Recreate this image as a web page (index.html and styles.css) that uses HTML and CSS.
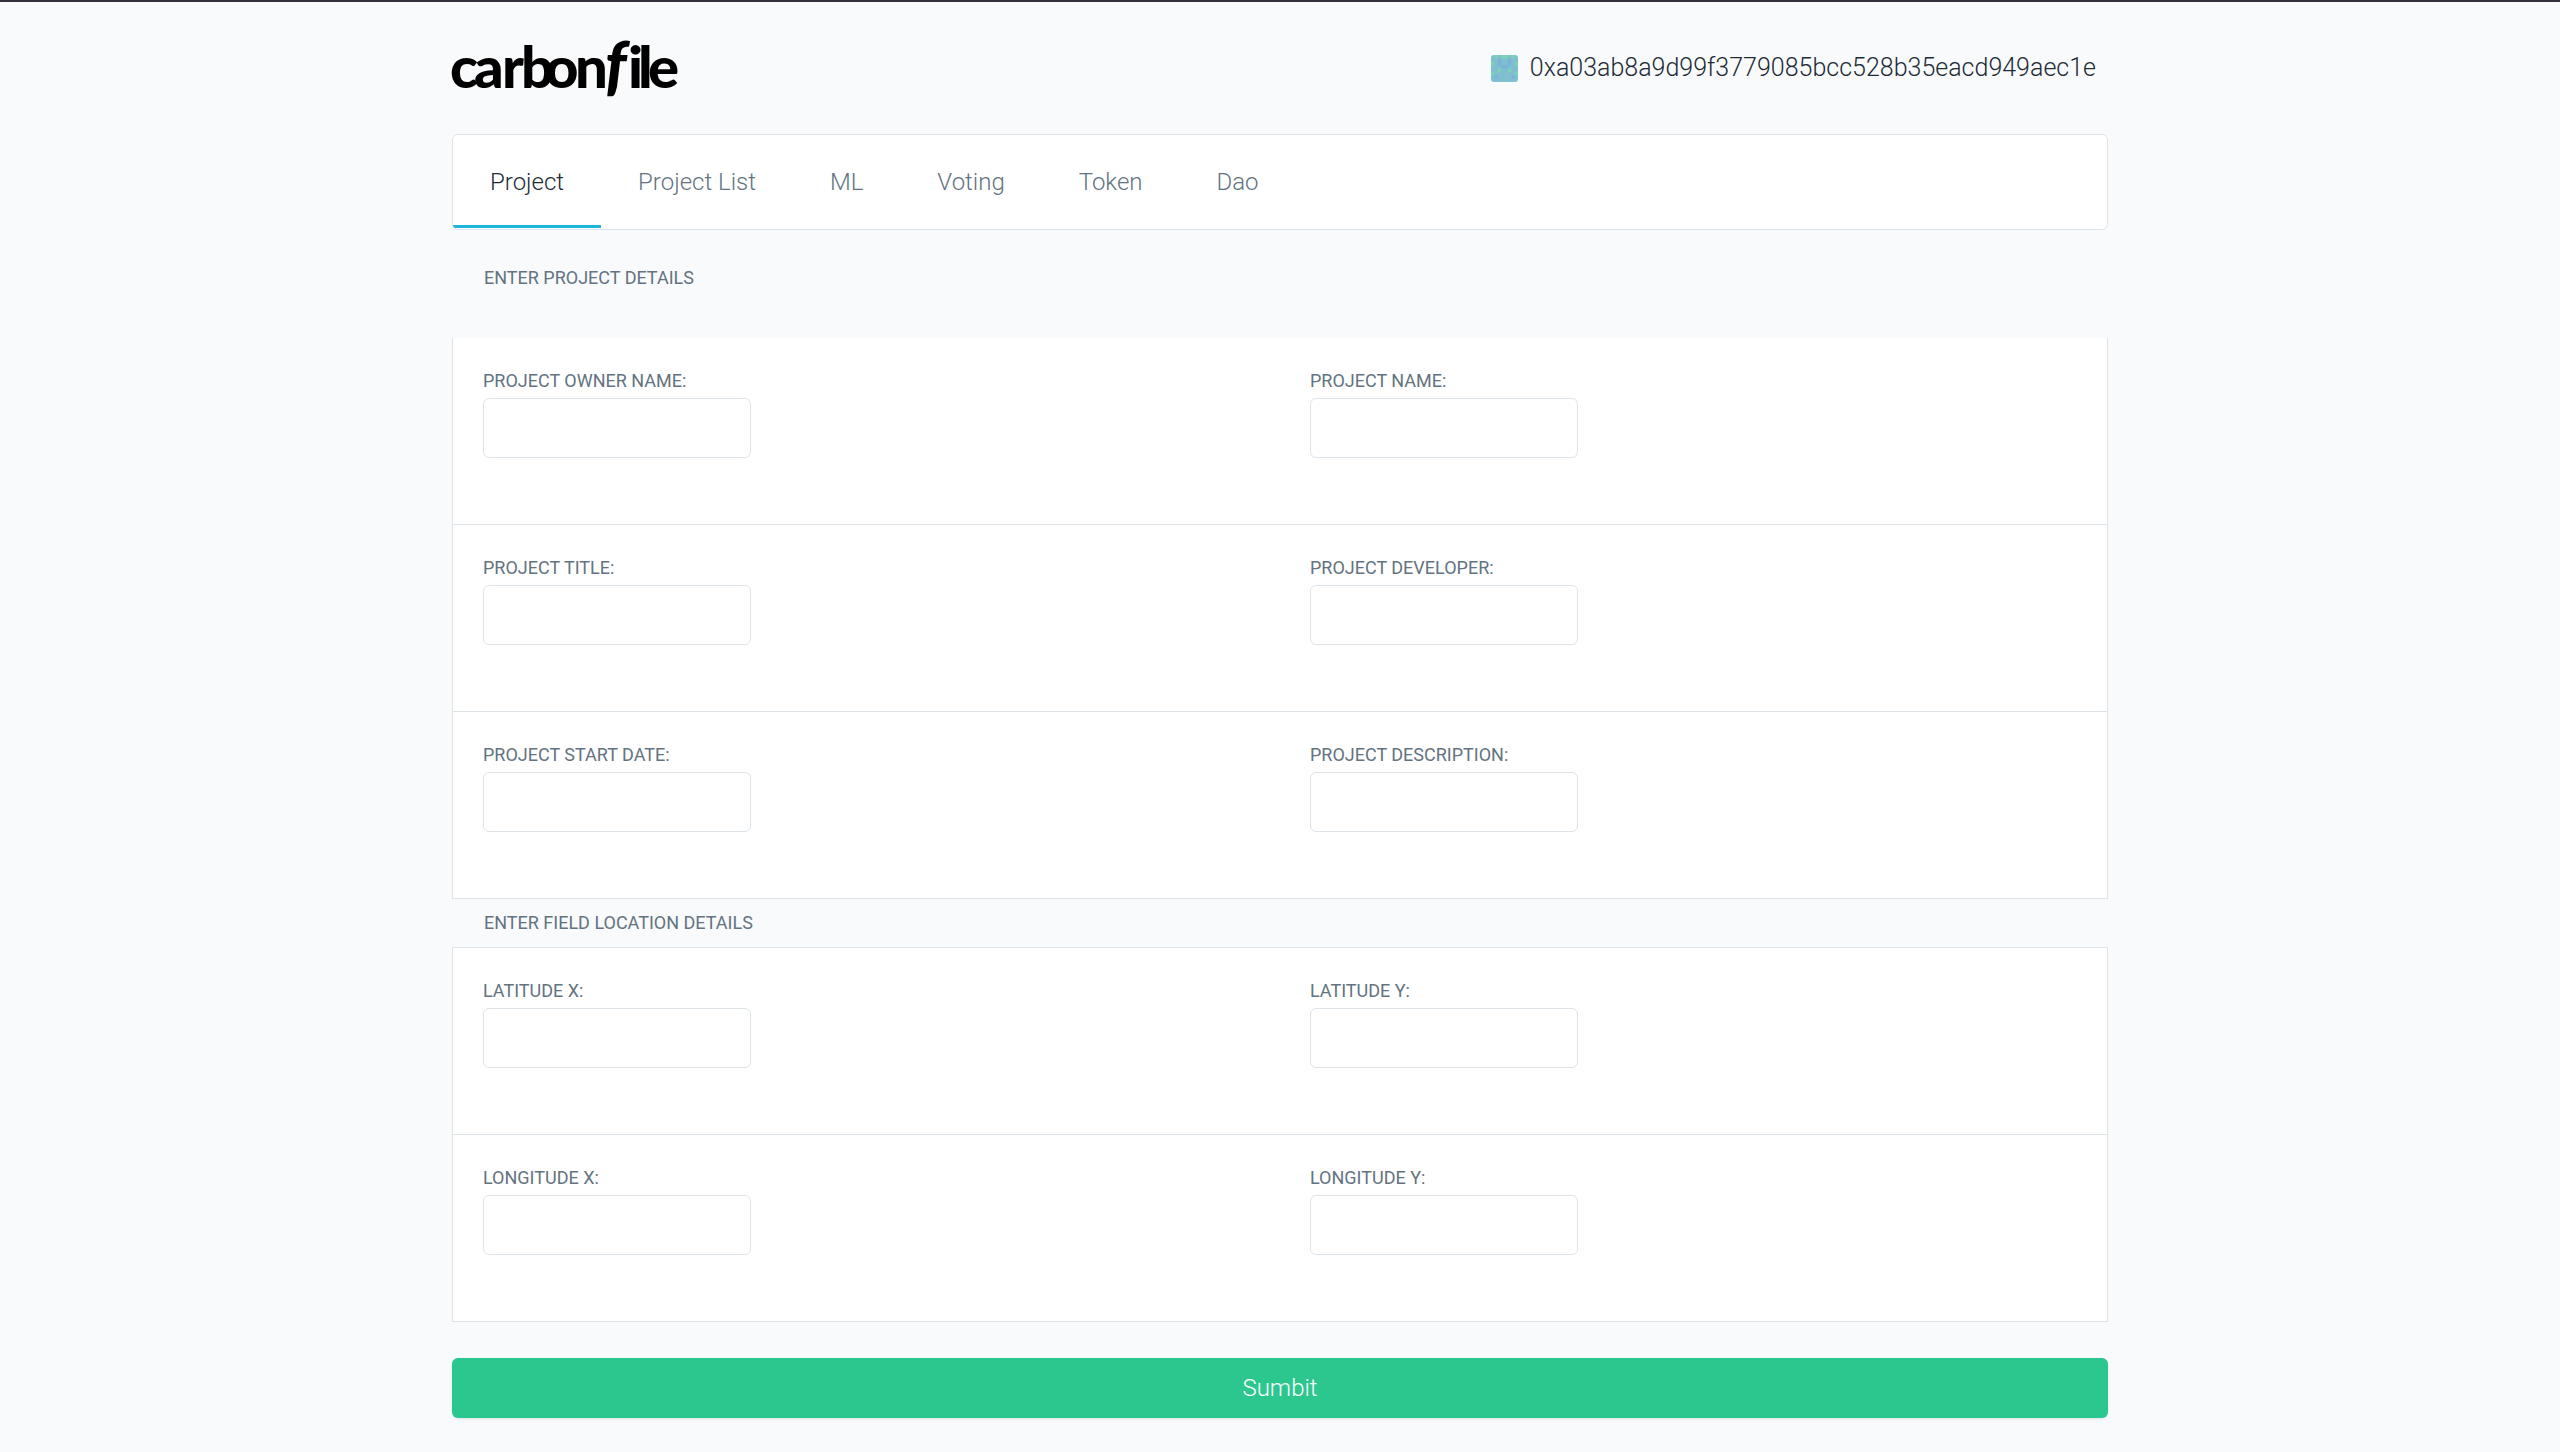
FILE: index.html
```html
<!DOCTYPE html>
<html lang="en">
<head>
<meta charset="utf-8">
<title>carbonfile</title>
<link rel="stylesheet" href="styles.css">
</head>
<body>
<div class="page">
  <header class="header">
    <a class="logo" href="#" aria-label="carbonfile">
      <svg width="228" height="64" viewBox="0 0 228 64"><text class="wordmark" y="52" x="-2 22 50 69 93 123">carbon<tspan class="wordmark-f" x="153">f</tspan><tspan x="176 186 196">ile</tspan></text></svg>
    </a>
    <div class="account">
      <svg class="identicon" width="27" height="27" viewBox="0 0 8 8" preserveAspectRatio="none">
        <rect width="8" height="8" fill="#7fbfcf"/>
        <path fill="#7ad3b4" d="M1 0h1v1H1zM3 0h2v1H3zM6 0h1v1H6zM0 2h1v1H0zM7 2h1v1H7zM2 4h1v1H2zM5 4h1v1H5zM0 5h1v1H0zM7 5h1v1H7z"/>
        <path fill="#79b3d9" d="M2 1h1v2H2zM5 1h1v2H5zM3 3h2v1H3zM1 6h1v1H1zM6 6h1v1H6z"/>
      </svg>
      <span>0xa03ab8a9d99f3779085bcc528b35eacd949aec1e</span>
    </div>
  </header>
  <nav class="tabs">
    <a class="tab tab-active" href="#" aria-current="page">Project</a>
    <a class="tab" href="#">Project List</a>
    <a class="tab" href="#">ML</a>
    <a class="tab" href="#">Voting</a>
    <a class="tab" href="#">Token</a>
    <a class="tab" href="#">Dao</a>
  </nav>
  <form class="form">
    <h2 class="section-title section-title-first">ENTER PROJECT DETAILS</h2>
    <div class="panel panel-open">
      <div class="row">
        <div class="field"><label for="owner">PROJECT OWNER NAME:</label><input id="owner" type="text"></div>
        <div class="field"><label for="name">PROJECT NAME:</label><input id="name" type="text"></div>
      </div>
      <div class="row">
        <div class="field"><label for="title">PROJECT TITLE:</label><input id="title" type="text"></div>
        <div class="field"><label for="developer">PROJECT DEVELOPER:</label><input id="developer" type="text"></div>
      </div>
      <div class="row">
        <div class="field"><label for="start">PROJECT START DATE:</label><input id="start" type="text"></div>
        <div class="field"><label for="description">PROJECT DESCRIPTION:</label><input id="description" type="text"></div>
      </div>
    </div>
    <h2 class="section-title">ENTER FIELD LOCATION DETAILS</h2>
    <div class="panel">
      <div class="row">
        <div class="field"><label for="lat-x">LATITUDE X:</label><input id="lat-x" type="text"></div>
        <div class="field"><label for="lat-y">LATITUDE Y:</label><input id="lat-y" type="text"></div>
      </div>
      <div class="row">
        <div class="field"><label for="long-x">LONGITUDE X:</label><input id="long-x" type="text"></div>
        <div class="field"><label for="long-y">LONGITUDE Y:</label><input id="long-y" type="text"></div>
      </div>
    </div>
    <button class="submit" type="submit">Sumbit</button>
  </form>
</div>
</body>
</html>
```
FILE: styles.css
```css
* {
  box-sizing: border-box;
}

body {
  margin: 0;
  min-height: 100vh;
  border-top: 2px solid #34313d;
  background: #f9fafc;
  color: #212b36;
  font-family: Roboto, "Noto Sans", sans-serif;
  font-size: 24px;
  font-weight: 300;
  line-height: 36px;
}

.page {
  max-width: 1656px;
  margin: 0 auto;
}

.header {
  display: flex;
  align-items: center;
  justify-content: space-between;
  height: 132px;
  padding-right: 12px;
}

.logo,
.identicon {
  display: block;
}

.logo svg {
  display: block;
  overflow: visible;
}

.wordmark {
  fill: #000;
  font-family: Lato, sans-serif;
  font-size: 58px;
  font-weight: 900;
}

.wordmark-f {
  font-size: 64px;
  font-style: italic;
}

.account {
  display: flex;
  align-items: center;
  gap: 12px;
  font-size: 25px;
}

.identicon {
  border-radius: 3px;
}

.tabs {
  display: flex;
  padding-bottom: 1px;
  background: #fff;
  border: 1px solid #dde4e9;
  border-radius: 6px;
}

.tab {
  padding: 29px 37px 25px;
  border-bottom: 3px solid transparent;
  color: #637381;
  text-decoration: none;
}

.tab-active {
  border-bottom-color: #1eb5d8;
  border-bottom-left-radius: 3px;
  color: #212b36;
}

.section-title,
.field label {
  color: #637381;
  font-size: 18px;
  font-weight: 400;
  line-height: 24px;
}

.section-title {
  margin: 0;
  padding: 12px 32px;
}

.section-title-first {
  padding: 36px 32px 48px;
}

.panel {
  background: #fff;
  border: 1px solid #dde4e9;
}

.panel-open {
  border-top: 0;
}

.row {
  display: grid;
  grid-template-columns: 1fr 1fr;
}

.row + .row {
  border-top: 1px solid #dde4e9;
}

.field {
  display: flex;
  flex-direction: column;
  align-items: flex-start;
  gap: 5px;
  padding: 31px 30px 66px;
}

.field input {
  width: 268px;
  height: 60px;
  padding: 0 18px;
  background: #fff;
  border: 1px solid #dde4e9;
  border-radius: 6px;
  font: inherit;
}

.submit {
  display: block;
  width: 100%;
  height: 60px;
  margin: 36px 0 24px;
  border: 0;
  border-radius: 6px;
  background: #2cc68f;
  box-shadow: 0 1px 3px rgba(0, 0, 0, 0.1);
  color: #fff;
  font: inherit;
}
```
